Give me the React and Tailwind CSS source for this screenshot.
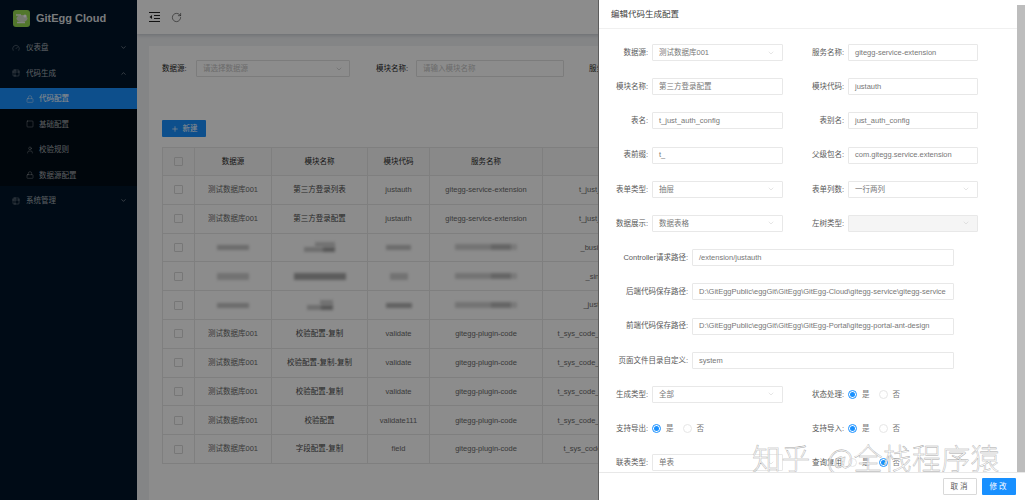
import React from "react";
import { Gauge, Table2, Lock, Square, User, ChevronDown, ChevronUp, RotateCw, Plus } from "lucide-react";

const FONT = "font-['Liberation_Sans','Noto_Sans_CJK_SC',sans-serif]";

function Logo() {
  return (
    <svg width="17" height="17" viewBox="0 0 17 17" className="shrink-0">
      <rect width="17" height="17" rx="3" fill="#96d950" />
      <ellipse cx="9" cy="8.5" rx="5.5" ry="3.5" fill="#d5dccd" />
      <path d="M3 5h5M4 12.5h8" stroke="#eef2ea" strokeWidth="1.4" />
      <circle cx="12" cy="6" r="1.6" fill="#ffffff" />
    </svg>
  );
}

function OutdentIcon() {
  return (
    <svg width="11" height="10" viewBox="0 0 11 10" fill="none" stroke="#222" strokeWidth="1" className="shrink-0">
      <path d="M0 0.5h11M5 3.5h6M5 6.5h6M0 9.5h11" />
      <path d="M3 3v4L0.5 5z" fill="#222" stroke="none" />
    </svg>
  );
}

function MenuItem({ icon: Icon, label, sub, active, open, chevron }) {
  return (
    <div className={`flex h-[21px] mb-[4.5px] items-center text-[7.5px] ${sub ? "pl-[26px]" : "pl-[12px]"} pr-[10px] ${active ? "bg-[#1890ff] text-white" : "text-[#ffffffa6]"}`}>
      <Icon size={8} strokeWidth={1.2} className="shrink-0" />
      <span className={sub ? "ml-[5px]" : "ml-[6px]"}>{label}</span>
      {chevron && (open ? <ChevronUp size={7} className="ml-auto" /> : <ChevronDown size={7} className="ml-auto" />)}
    </div>
  );
}

function Sidebar() {
  return (
    <aside className="w-[137px] shrink-0 h-full bg-[#001529]">
      <div className="flex items-center h-[37.4px] pl-[13px] gap-[6px]">
        <Logo />
        <span className="text-[11px] font-bold text-[#ffffffe0]">GitEgg Cloud</span>
      </div>
      <div>
        <MenuItem icon={Gauge} label="仪表盘" chevron />
        <MenuItem icon={Table2} label="代码生成" chevron open />
        <div className="bg-[#000c17]">
          <MenuItem icon={Lock} label="代码配置" sub active />
          <MenuItem icon={Square} label="基础配置" sub />
          <MenuItem icon={User} label="校验规则" sub />
          <MenuItem icon={Lock} label="数据源配置" sub />
        </div>
        <MenuItem icon={Table2} label="系统管理" chevron />
      </div>
    </aside>
  );
}

function Smudge({ w, h = 5, tone = "bg-[#c4c4c4]" }) {
  return <span className={`block mx-auto blur-[1.5px] ${tone}`} style={{ width: w, height: h }} />;
}

function SmudgeStack({ top, bottom, h = 5 }) {
  return (
    <span className="flex flex-col items-end mx-auto" style={{ width: bottom }}>
      <span className="block blur-[1.5px] bg-[#cfcfcf]" style={{ width: top, height: h }} />
      <span className="flex w-full blur-[1.5px]" style={{ height: h }}>
        <span className="flex-1 bg-[#c8c8c8]" />
        <span className="w-[12px] bg-[#a0a0a0]" />
      </span>
    </span>
  );
}

function SmudgeLong({ w }) {
  return (
    <span className="flex mx-auto blur-[1.5px] h-[6px]" style={{ width: w }}>
      <span className="flex-1 bg-[#d2d2d2]" />
      <span className="w-[20px] bg-[#b8b8b8]" />
      <span className="w-[6px] bg-[#dddddd]" />
    </span>
  );
}

const rows = [
  ["测试数据库001", "第三方登录列表", "justauth", "gitegg-service-extension", "t_just_auth_config"],
  ["测试数据库001", "第三方登录配置", "justauth", "gitegg-service-extension", "t_just_auth_config"],
  null,
  null,
  null,
  ["测试数据库001", "校验配置-复制", "validate", "gitegg-plugin-code", "t_sys_code_generator_validate"],
  ["测试数据库001", "校验配置-复制-复制", "validate", "gitegg-plugin-code", "t_sys_code_generator_validate"],
  ["测试数据库001", "校验配置-复制", "validate", "gitegg-plugin-code", "t_sys_code_generator_validate"],
  ["测试数据库001", "校验配置", "validate111", "gitegg-plugin-code", "t_sys_code_generator_validate"],
  ["测试数据库001", "字段配置-复制", "field", "gitegg-plugin-code", "t_sys_code_generator_field"],
];

const smudges = [
  { c1: <Smudge w={32} />, c2: <SmudgeStack top={20} bottom={31} />, c3: <Smudge w={25} />, c5: "_business_config" },
  { c1: <Smudge w={32} h={7} tone="bg-[#d0d0d0]" />, c2: <Smudge w={52} h={7} tone="bg-[#a8a8a8]" />, c3: <Smudge w={18} h={7} tone="bg-[#d0d0d0]" />, c5: "_single_config" },
  { c1: <Smudge w={32} />, c2: <SmudgeStack top={13} bottom={26} />, c3: <Smudge w={26} tone="bg-[#b0b0b0]" />, c5: "_just_auth_list_" },
];

function Check() {
  return <span className="block mx-auto w-[9px] h-[9px] border border-[#d9d9d9] rounded-[1px]" />;
}

const td = "border-b border-r border-[#e8e8e8] text-center px-0 py-0 overflow-hidden whitespace-nowrap";

function DataTable() {
  let blurIndex = 0;
  return (
    <table className="table-fixed w-[560px] border-t border-l border-[#e8e8e8] text-[7.5px] text-[#6b6b6b]">
      <colgroup>
        <col className="w-[32px]" />
        <col className="w-[77px]" />
        <col className="w-[96px]" />
        <col className="w-[62px]" />
        <col className="w-[113px]" />
        <col className="w-[134px]" />
        <col className="w-[46px]" />
      </colgroup>
      <thead>
        <tr className="h-[28px] bg-[#fafafa] text-[#262626]">
          <th className={`${td} font-normal`}><Check /></th>
          <th className={`${td} font-normal`}>数据源</th>
          <th className={`${td} font-normal`}>模块名称</th>
          <th className={`${td} font-normal`}>模块代码</th>
          <th className={`${td} font-normal`}>服务名称</th>
          <th className={`${td} font-normal`}>表名</th>
          <th className={`${td} font-normal`}>操作</th>
        </tr>
      </thead>
      <tbody>
        {rows.map((r, i) => {
          if (!r) {
            const s = smudges[blurIndex++];
            return (
              <tr key={i} className="h-[28.8px]">
                <td className={td}><Check /></td>
                <td className={td}>{s.c1}</td>
                <td className={td}>{s.c2}</td>
                <td className={td}>{s.c3}</td>
                <td className={td}><SmudgeLong w={62} /></td>
                <td className={td}>{s.c5}</td>
                <td className={td} />
              </tr>
            );
          }
          return (
            <tr key={i} className="h-[28.8px]">
              <td className={td}><Check /></td>
              <td className={td}>{r[0]}</td>
              <td className={`${td} text-[#4a4a4a]`}>{r[1]}</td>
              <td className={td}>{r[2]}</td>
              <td className={td}>{r[3]}</td>
              <td className={td}>{r[4]}</td>
              <td className={td} />
            </tr>
          );
        })}
      </tbody>
    </table>
  );
}

function MainArea() {
  return (
    <main className="flex-1 min-w-0 h-full flex flex-col bg-[#f0f2f5] overflow-hidden">
      <header className="h-[34px] shrink-0 bg-white flex items-center pl-[12px] gap-[11px] shadow-[0_1px_4px_rgba(0,21,41,0.2)] text-[#222]">
        <OutdentIcon />
        <RotateCw size={11} strokeWidth={1.2} />
      </header>
      <div className="flex-1 min-h-0 mt-[12px] ml-[12px] bg-white pl-[13px] pt-[14px]">
        <div className="flex items-center text-[7.5px] text-[#262626]">
          <span className="w-[34px] shrink-0">数据源:</span>
          <div className="w-[154px] h-[17px] border border-[#e2e2e2] rounded-[1px] flex items-center px-[6px] text-[#c4c4c4]">
            请选择数据源
            <ChevronDown size={8} className="ml-auto" />
          </div>
          <span className="ml-[26px] w-[40px] shrink-0">模块名称:</span>
          <div className="w-[148px] h-[17px] border border-[#e2e2e2] rounded-[1px] flex items-center px-[6px] text-[#c4c4c4]">
            请输入模块名称
          </div>
          <span className="ml-[25px] whitespace-nowrap">服务名称:</span>
        </div>
        <button className="mt-[43px] w-[44px] h-[17px] bg-[#1890ff] rounded-[1px] text-white text-[7.5px] flex items-center justify-center gap-[4px]">
          <Plus size={8} />
          新建
        </button>
        <div className="mt-[10px]">
          <DataTable />
        </div>
      </div>
    </main>
  );
}

const inputBox = "h-[17px] shrink-0 border border-[#e8e8e8] rounded-[1px] flex items-center px-[6px] text-[#777] whitespace-nowrap overflow-hidden";

function Label({ w, children }) {
  return <span className="shrink-0 text-right pr-[4px] text-[#595959] whitespace-nowrap" style={{ width: w }}>{children}</span>;
}

function Input({ w, value }) {
  return <div className={inputBox} style={{ width: w }}>{value}</div>;
}

function Select({ w, value, disabled }) {
  return (
    <div className={`${inputBox} ${disabled ? "bg-[#f5f5f5]" : ""}`} style={{ width: w }}>
      {value}
      <ChevronDown size={8} strokeWidth={1.2} className="ml-auto mr-[1px] text-[#bfbfbf] shrink-0" />
    </div>
  );
}

function Radio({ checked, label }) {
  return (
    <span className="flex items-center">
      <span className={`w-[9px] h-[9px] rounded-full border flex items-center justify-center bg-white ${checked ? "border-[#1890ff]" : "border-[#e6e6e6]"}`}>
        {checked && <span className="w-[5px] h-[5px] rounded-full bg-[#1890ff]" />}
      </span>
      <span className="ml-[5px] w-[8px] text-[#777]">{label}</span>
    </span>
  );
}

function Radios({ yes = true }) {
  return (
    <div className="flex items-center gap-[8.5px] h-[17px]">
      <Radio checked={yes} label="是" />
      <Radio checked={!yes} label="否" />
    </div>
  );
}

function Row({ left, right }) {
  return (
    <div className="flex items-center h-[17px] shrink-0">
      <div className="flex items-center w-[171px] shrink-0">{left}</div>
      <div className="flex items-center ml-[17px]">{right}</div>
    </div>
  );
}

function Wide({ label, value }) {
  return (
    <div className="flex items-center h-[17px] shrink-0">
      <Label w={80}>{label}</Label>
      <Input w={262} value={value} />
    </div>
  );
}

const W1 = 131;
const W2 = 130;

function Drawer() {
  return (
    <section className="absolute top-0 right-0 bottom-0 w-[427px] bg-white border-l border-[#5c5c5c] flex flex-col text-[7.5px]">
      <div className="h-[29px] shrink-0 border-b border-[#f0f0f0] flex items-center pl-[12px] text-[8.5px] text-[#404040] mr-[8px]">
        编辑代码生成配置
      </div>
      <div className="flex-1 min-h-0 overflow-hidden flex flex-col gap-[17.2px] pt-[15px] pl-[13px]">
        <Row left={<><Label w={40}>数据源:</Label><Select w={W1} value="测试数据库001" /></>} right={<><Label w={48}>服务名称:</Label><Input w={W2} value="gitegg-service-extension" /></>} />
        <Row left={<><Label w={40}>模块名称:</Label><Input w={W1} value="第三方登录配置" /></>} right={<><Label w={48}>模块代码:</Label><Input w={W2} value="justauth" /></>} />
        <Row left={<><Label w={40}>表名:</Label><Input w={W1} value="t_just_auth_config" /></>} right={<><Label w={48}>表别名:</Label><Input w={W2} value="just_auth_config" /></>} />
        <Row left={<><Label w={40}>表前缀:</Label><Input w={W1} value="t_" /></>} right={<><Label w={48}>父级包名:</Label><Input w={W2} value="com.gitegg.service.extension" /></>} />
        <Row left={<><Label w={40}>表单类型:</Label><Select w={W1} value="抽屉" /></>} right={<><Label w={48}>表单列数:</Label><Select w={W2} value="一行两列" /></>} />
        <Row left={<><Label w={40}>数据展示:</Label><Select w={W1} value="数据表格" /></>} right={<><Label w={48}>左树类型:</Label><Select w={W2} value="" disabled /></>} />
        <Wide label="Controller请求路径:" value="/extension/justauth" />
        <Wide label="后端代码保存路径:" value="D:\GitEggPublic\eggGit\GitEgg\GitEgg-Cloud\gitegg-service\gitegg-service" />
        <Wide label="前端代码保存路径:" value="D:\GitEggPublic\eggGit\GitEgg\GitEgg-Portal\gitegg-portal-ant-design" />
        <Wide label="页面文件目录自定义:" value="system" />
        <Row left={<><Label w={40}>生成类型:</Label><Select w={W1} value="全部" /></>} right={<><Label w={48}>状态处理:</Label><Radios /></>} />
        <Row left={<><Label w={40}>支持导出:</Label><Radios /></>} right={<><Label w={48}>支持导入:</Label><Radios /></>} />
        <Row left={<><Label w={40}>联表类型:</Label><Select w={W1} value="单表" /></>} right={<><Label w={48}>查询复用:</Label><Radios yes={false} /></>} />
      </div>
      <div className="h-[28px] shrink-0 border-t border-[#e8e8e8] bg-white flex items-center justify-end gap-[5px] pr-[9px] relative z-10">
        <button className="w-[34px] h-[17px] border border-[#d9d9d9] rounded-[1px] text-[#595959] tracking-[2px]">取消</button>
        <button className="w-[34px] h-[17px] bg-[#1890ff] rounded-[1px] text-white tracking-[2px]">修改</button>
      </div>
      <div className="absolute right-0 top-[5px] bottom-[28px] w-[8px] bg-[#bdbdbd]" />
    </section>
  );
}

export default function App() {
  return (
    <div className={`relative w-screen h-screen overflow-hidden flex ${FONT}`}>
      <Sidebar />
      <MainArea />
      <div className="absolute inset-0 bg-black/45" />
      <Drawer />
      <div className="absolute left-[752px] top-[437px] text-[29px] leading-[40px] tracking-[0.2px] [word-spacing:10px] font-light text-white/80 [-webkit-text-stroke:0.4px_#a8a8a8] whitespace-nowrap font-['Noto_Sans_CJK_SC',sans-serif]">
        知乎 @全栈程序猿
      </div>
    </div>
  );
}
